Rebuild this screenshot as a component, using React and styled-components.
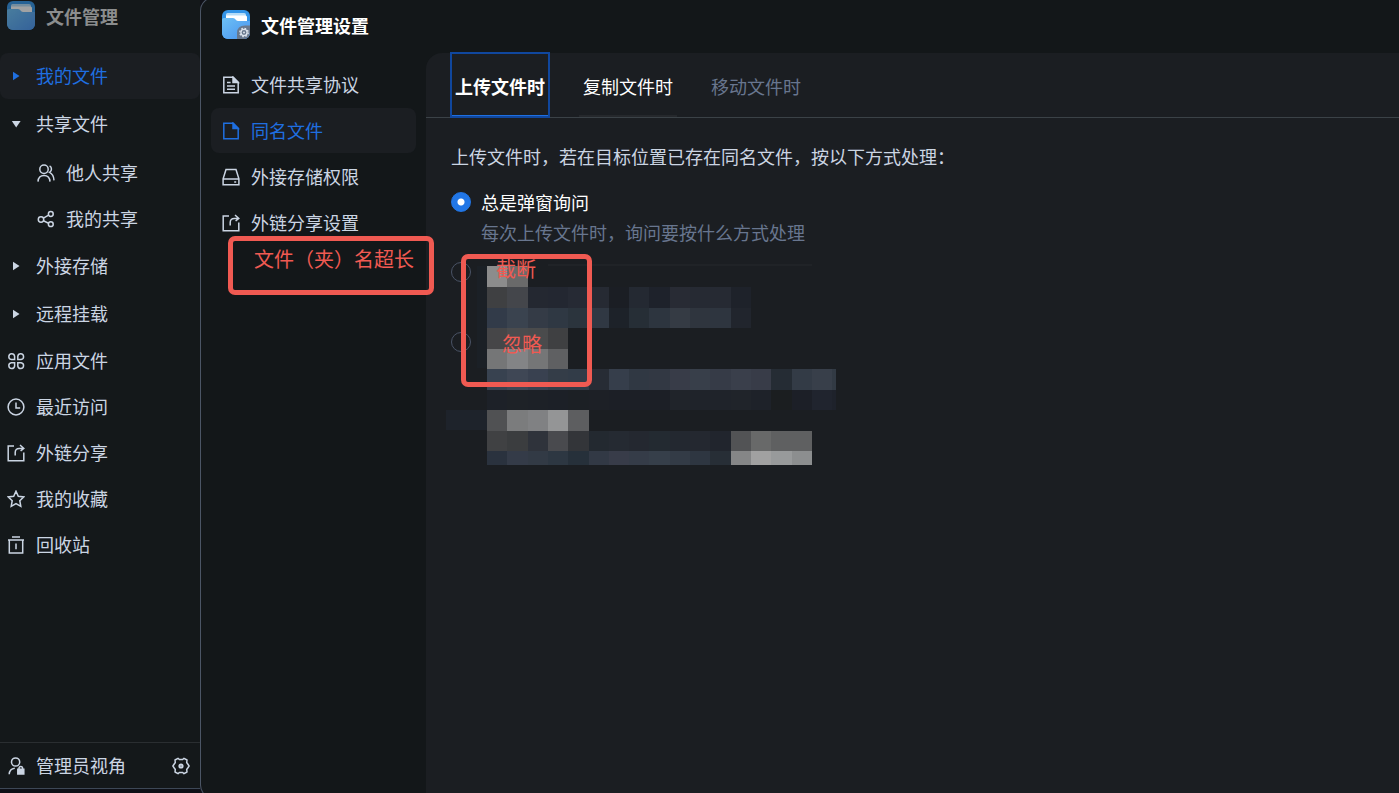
import React, {useState} from "react";
import styled, {createGlobalStyle, css} from "styled-components";

const GlobalStyle = createGlobalStyle`
  * {
    box-sizing: border-box;
  }
  body {
    margin: 0;
    background: #0f1017;
    color: #cbd5e3;
    font-family: "Noto Sans CJK SC", "Noto Sans", sans-serif;
    font-size: 18px;
    line-height: 30px;
    overflow: hidden;
  }
  button, input {
    font: inherit;
    color: inherit;
    margin: 0;
  }
`;

/* icons, all on an 18 grid */
const Icon = ({children}) => (
    <Glyph viewBox="0 0 18 18" aria-hidden="true">{children}</Glyph>
);
const icons = {
    right: <path d="M6 4.8 12.500 9l-6.500 4.2z" fill="currentColor" stroke="none"/>,
    down: <path d="M4.800 6h8.800L9.2 12.6z" fill="currentColor" stroke="none"/>,
    users: <>
        <circle cx="7" cy="5.2" r="4.2"/>
        <path d="M1 17.6c.3-4.2 2.6-6 6-6s5.700 1.800 6 6M12.600 1.800c2.400 1.200 2.600 5 0 6.600 2.800 1.400 4.200 4 4.400 8"/>
    </>,
    nodes: <>
        <circle cx="4" cy="9.500" r="2.700"/>
        <circle cx="13.800" cy="4" r="2.400"/>
        <circle cx="13.800" cy="14.200" r="2.400"/>
        <path d="m6.400 8.200 5.200-3M6.400 10.800l5.200 2.500"/>
    </>,
    apps: <>
        <path d="M7.600 7.600H4.300a2.900 2.900 0 1 1 3.300-3.300zM10.800 7.600V4.300a2.900 2.900 0 1 1 3.300 3.300zM7.600 10.800v3.300a2.900 2.900 0 1 1-3.300-3.300zM10.800 10.800h3.300a2.900 2.900 0 1 1-3.300 3.300z"/>
    </>,
    clock: <>
        <circle cx="9" cy="9" r="7.900"/>
        <path d="M9 4.600V10h4.200"/>
    </>,
    share: <path d="M7 2H1.200v14.800h15.600V8.600M8.200 11.600V8.400c0-2.600 1.400-4 4-4h4.200M13 1l3.800 3.400L13.600 7"/>,
    star: <path d="m9 1.200 2.300 5 5.500.7-4 3.800 1 5.600L9 13.600l-4.800 2.700 1-5.600-4-3.800 5.500-.7z"/>,
    trash: <path d="M1 3.900h16M5 1.100h8M2.300 4v12.900h13.400V4M9 7.600v5.600"/>,
    doc: <>
        <path d="M1.800 1.200h9.400l5 5v10.600H1.800zM5 10h8M5 13.300h8M5 6.600h3.600"/>
        <path d="M11 1.200v5.200h5.200z" fill="currentColor"/>
    </>,
    file: <>
        <path d="M1.800 1.200h9.400l5 5v10.600H1.800z"/>
        <path d="M11 1.200v5.200h5.200z" fill="currentColor"/>
    </>,
    drive: <path d="M4 1.600h10l2.900 9.200v6H1.100v-6zM1.100 11h15.800M12.200 14h2"/>,
    admin: <>
        <circle cx="8.600" cy="5" r="4.100"/>
        <path d="M2.200 17.200c.2-3.600 2-5.600 5.600-6"/>
        <path d="M10.800 12.200h6v4.800h-6z" fill="currentColor"/>
        <path d="M12 12v-.6c0-2.400 3.600-2.400 3.600 0v.6"/>
    </>,
    gear: <>
        <path d="M6 1.300 7.300 2.500h3.400L12 1.300l3 1.700-.3 2.500 1.400 2 1 1.500-1 1.500-1.400 2 .3 2.500-3 1.700-1.300-1.200H7.300L6 16.700 3 15l.3-2.500-1.400-2L.9 9l1-1.500 1.400-2L3 3z" strokeLinejoin="round"/>
        <circle cx="9" cy="9" r="1.600" strokeWidth="2"/>
    </>,
};

const FolderLogo = ({settings}) => (
    <Logo viewBox="0 0 28 29" $dim={!settings} aria-hidden="true">
        <defs>
            <linearGradient id={settings ? "blueA" : "blueB"} x1="0" y1="0" x2="1" y2="1">
                <stop offset="0" stopColor="#6cc0f5"/>
                <stop offset="1" stopColor="#4a93ef"/>
            </linearGradient>
            <clipPath id={settings ? "clipA" : "clipB"}>
                <rect width="28" height="29" rx="6"/>
            </clipPath>
        </defs>
        <g clipPath={settings ? "url(#clipA)" : "url(#clipB)"}>
            <rect width="28" height="29" fill="#3294e8"/>
            <path d="M4 4.500q0-1.500 1.500-1.500h16.500q2 0 2 2v5H4z" fill="#b5dcf8"/>
            <path d="M4 5.500h19.500q1.500 0 1.500 1.500v5H4z" fill="#fff"/>
            <path d="M0 9.500q0-1.500 2-1.500h9c2.600 0 2.600 3 5 3h12v18H0z" fill={settings ? "url(#blueA)" : "url(#blueB)"}/>
            {settings && <>
                <path d="M28 15.500V29H15v-6q0-7.500 8-7.500z" fill="#69788d"/>
                <circle cx="22" cy="22.500" r="3.100" fill="none" stroke="#dde4ed" strokeWidth="1.300"/>
                <circle cx="22" cy="22.500" r="1" fill="#dde4ed"/>
                <circle cx="22" cy="22.500" r="4.200" fill="none" stroke="#dde4ed" strokeWidth="1.300" strokeDasharray="1.650 1.650"/>
            </>}
        </g>
    </Logo>
);

/* censored block, one row of cell colours per line */
const CELL = 20.3;
const mosaic = [
    "8c8c8c 6a6a6a",
    "3f4042 44464b 242831 232731 262a34 262a33 1b1e24 242932 1e222b 282b34 262a33 262a33 1e222a",
    "323b49 3a434f 343b46 2f3843 2b343d 303843 1d2229 262e36 2d353f 353b44 2f353e 2e353f 21252d",
    "464648 4b4c4e 4a4b4c 3f4042",
    "757677 838486 757677 5f6062",
    "384250 3f4755 394150 343d48 323c48 272c35 363e4b 303843 323843 383c48 383f4a 363b47 3a3f4b 383c48 252c34 333b46 383f4a 323a44",
    "1d2128 1e2227 1d2127 1c2027 1c2025 1d2026 1c1f26 1c1f26 1c1f26 20242a 1f232a 1f232a 20242a 1e2229 1b1e20 1c1f27 20242e 1e222b",
    "505153 7b7c7d 808183 949596 5d5e60",
    "404143 3b3d3f 2f333b 494a4e 333539 232930 252a32 242830 232a31 232830 242830 21252d 525355 686969 5f6061 5f6061",
    "2a323e 343b48 323a45 2d3742 26303a 323945 383c49 353c48 363f4a 333b46 2e3641 272e36 858687 a1a1a1 989a9b 8c8e8f",
];
const Mosaic = () => (
    <MosaicArt viewBox="0 0 391 202" shapeRendering="crispEdges" aria-hidden="true">
        <rect x="103" y="0" width="264" height="2" fill="#202327"/>
        <rect x="32" y="2" width="10" height="102" fill="#1b2026"/>
        <rect x="1" y="146" width="41" height="20" fill="#1e232b"/>
        {mosaic.map((row, r) => row.split(" ").map((color, c) => {
            const y = r === 0 ? 2 : 23 + (r - 1) * 20.5;
            const height = r === 0 ? 21 : r === 9 ? 14 : 20.5;
            return (
                <rect key={r + "-" + c} x={42 + c * CELL} y={y}
                    width={c === 17 ? 4 : CELL} height={height} fill={"#" + color}/>
            );
        }))}
    </MosaicArt>
);

const tabs = ["上传文件时", "复制文件时", "移动文件时"];

export default function App() {
    const [tab, setTab] = useState(0);
    const [choice, setChoice] = useState("ask");
    const pick = (e) => setChoice(e.target.value);
    return (
        <>
        <GlobalStyle/>
        <Page>
            <Sidebar>
                <SideHeader>
                    <FolderLogo/>
                    <AppName>文件管理</AppName>
                </SideHeader>
                <SideNav>
                    <TreeItem $active><Icon>{icons.right}</Icon>我的文件</TreeItem>
                    <TreeItem><Icon>{icons.down}</Icon>共享文件</TreeItem>
                    <Children>
                        <Item $nested><Icon>{icons.users}</Icon>他人共享</Item>
                        <Item $nested><Icon>{icons.nodes}</Icon>我的共享</Item>
                    </Children>
                    <TreeItem><Icon>{icons.right}</Icon>外接存储</TreeItem>
                    <TreeItem><Icon>{icons.right}</Icon>远程挂载</TreeItem>
                    <Item><Icon>{icons.apps}</Icon>应用文件</Item>
                    <Item><Icon>{icons.clock}</Icon>最近访问</Item>
                    <Item><Icon>{icons.share}</Icon>外链分享</Item>
                    <Item><Icon>{icons.star}</Icon>我的收藏</Item>
                    <Item><Icon>{icons.trash}</Icon>回收站</Item>
                </SideNav>
                <SideFooter>
                    <Item><Icon>{icons.admin}</Icon>管理员视角</Item>
                    <IconButton aria-label="设置"><Icon>{icons.gear}</Icon></IconButton>
                </SideFooter>
            </Sidebar>
            <Dialog>
                <DialogSide>
                    <DialogHeader>
                        <FolderLogo settings/>
                        <DialogTitle>文件管理设置</DialogTitle>
                    </DialogHeader>
                    <SettingsNav>
                        <SettingsItem><Icon>{icons.doc}</Icon>文件共享协议</SettingsItem>
                        <SettingsItem $active><Icon>{icons.file}</Icon>同名文件</SettingsItem>
                        <SettingsItem><Icon>{icons.drive}</Icon>外接存储权限</SettingsItem>
                        <SettingsItem><Icon>{icons.share}</Icon>外链分享设置</SettingsItem>
                    </SettingsNav>
                    <NavCallout>文件（夹）名超长</NavCallout>
                </DialogSide>
                <Panel>
                    <Tabs role="tablist">
                        {tabs.map((name, i) => (
                            <Tab key={name} role="tab" aria-selected={tab === i}
                                $active={tab === i} $hover={i === 1}
                                onClick={() => setTab(i)}>{name}</Tab>
                        ))}
                    </Tabs>
                    <PanelBody>
                        <Lead>上传文件时，若在目标位置已存在同名文件，按以下方式处理：</Lead>
                        <Option>
                            <Radio id="ask" name="mode" value="ask" checked={choice === "ask"} onChange={pick}/>
                            <OptionName htmlFor="ask">总是弹窗询问</OptionName>
                        </Option>
                        <Hint>每次上传文件时，询问要按什么方式处理</Hint>
                        <Censored>
                            <Radio id="cut" name="mode" value="cut" checked={choice === "cut"} onChange={pick}/>
                            <Radio id="skip" name="mode" value="skip" checked={choice === "skip"} onChange={pick}/>
                            <Mosaic/>
                            <OptionCallout>
                                <Note htmlFor="cut">截断</Note>
                                <Note htmlFor="skip" $shift>忽略</Note>
                            </OptionCallout>
                        </Censored>
                    </PanelBody>
                </Panel>
            </Dialog>
        </Page>
        </>
    );
}

const Glyph = styled.svg`
  width: 18px;
  height: 18px;
  flex: none;
  fill: none;
  stroke: currentColor;
  stroke-width: 1.5;
`;
const Logo = styled.svg`
  width: 28px;
  height: 29px;
  flex: none;
  opacity: ${(props) => (props.$dim ? 0.6 : 1)};
`;
const Page = styled.div`
  display: grid;
  grid-template-columns: 200px 1fr;
  height: 100vh;
  overflow: hidden;
`;
const Sidebar = styled.aside`
  display: flex;
  flex-direction: column;
  margin-bottom: 4px;
  background: #14181a;
  border-bottom: 1px solid #3d4756;
`;
const SideHeader = styled.header`
  display: flex;
  gap: 11px;
  height: 52px;
  padding: 1px 7px;
`;
const AppName = styled.h1`
  margin: 0;
  font-size: 18px;
  color: #8b8d8e;
`;
const SideNav = styled.nav`
  display: flex;
  flex-direction: column;
  flex: 1;
`;
const Item = styled.button`
  display: flex;
  align-items: center;
  gap: 11px;
  width: 100%;
  height: 46px;
  padding: 0 0 2px ${(props) => (props.$nested ? "37px" : "7px")};
  border: 0;
  border-radius: 8px;
  background: ${(props) => (props.$active ? "#1b1e22" : "transparent")};
  color: ${(props) => (props.$active ? "#1f6fe0" : "#cbd5e3")};
  text-align: left;
  white-space: nowrap;

  ${Glyph} {
    margin-top: 2px;
  }
`;
const TreeItem = styled(Item)`
  margin: 1px 0;
`;
const Children = styled.div`
  padding-top: 2px;
`;
const SideFooter = styled.footer`
  display: flex;
  align-items: center;
  height: 46px;
  padding-right: 10px;
  border-top: 1px solid #2a2e31;
`;
const IconButton = styled.button`
  display: flex;
  padding: 0;
  border: 0;
  background: none;
  color: #cbd5e3;
`;
const Dialog = styled.main`
  display: grid;
  grid-template-columns: 225px 1fr;
  margin: -3px 0 -6px;
  padding-top: 3px;
  background: #131719;
  border: 1px solid #4b5565;
  border-right: 0;
  border-radius: 14px 0 0 14px;
`;
const DialogSide = styled.aside`
  position: relative;
  padding: 0 10px;
`;
const DialogHeader = styled.header`
  display: flex;
  align-items: center;
  gap: 11px;
  height: 61px;
  padding: 0 11px 14px;
`;
const DialogTitle = styled.h2`
  margin: 0;
  font-size: 18px;
  color: #fff;
  white-space: nowrap;
`;
const SettingsNav = styled.nav`
  display: flex;
  flex-direction: column;
  gap: 1px;
`;
const SettingsItem = styled(Item)`
  height: 45px;
  padding-left: 11px;
`;
const callout = css`
  position: absolute;
  border: 5px solid #f05a52;
  border-radius: 7px;
  color: #f05a52;
  font-size: 20px;
  white-space: nowrap;
`;
const NavCallout = styled.div`
  ${callout}
  z-index: 1;
  left: 27px;
  top: 235px;
  width: 206px;
  height: 59px;
  padding: 3px 21px;
`;
const Panel = styled.section`
  min-width: 0;
  margin-top: 52px;
  background: #1b1e22;
  border-top-left-radius: 16px;
`;
const Tabs = styled.div`
  display: flex;
  gap: 30px;
  height: 65px;
  padding-left: 25px;
  border-bottom: 1px solid #3b4247;
`;
const Tab = styled.button`
  padding: 3px 4px 0;
  border: 0;
  border-bottom: 2px solid ${(props) => (props.$active ? "#1f6fe0" : props.$hover ? "#25282c" : "transparent")};
  background: none;
  color: ${(props) => (props.$active || props.$hover ? "#fff" : "#68768f")};
  font-weight: ${(props) => (props.$active ? 700 : 400)};
  outline: ${(props) => (props.$active ? "2px solid #10479e" : "none")};
  outline-offset: -1px;
  white-space: nowrap;
`;
const PanelBody = styled.div`
  padding: 23px 25px;
`;
const Lead = styled.p`
  margin: 0 0 16px;
`;
const Option = styled.div`
  display: flex;
  align-items: center;
  gap: 10px;
`;
const OptionName = styled.label`
  color: #fff;
`;
const Radio = styled.input.attrs({type: "radio"})`
  appearance: none;
  flex: none;
  width: 20px;
  height: 20px;
  border: 1px solid #4a5366;
  border-radius: 50%;
  &:checked {
    border-color: #2176e6;
    background: radial-gradient(circle, #fff 3px, #2176e6 4px);
  }
`;
const Hint = styled.p`
  margin: 0 0 10px;
  padding-left: 30px;
  color: #68768f;
`;
const Censored = styled.div`
  position: relative;
  display: flex;
  flex-direction: column;
  gap: 50px;
  padding: 5px 0 130px;
`;
const MosaicArt = styled.svg`
  position: absolute;
  left: -6px;
  top: 7px;
  width: 391px;
  height: 202px;
`;
const OptionCallout = styled.div`
  ${callout}
  display: flex;
  flex-direction: column;
  gap: 55px;
  left: 10px;
  top: -3px;
  width: 131px;
  height: 133px;
  padding-left: 30px;
  line-height: 20px;
`;
const Note = styled.label`
  padding-left: ${(props) => (props.$shift ? "6px" : "0")};
`;
